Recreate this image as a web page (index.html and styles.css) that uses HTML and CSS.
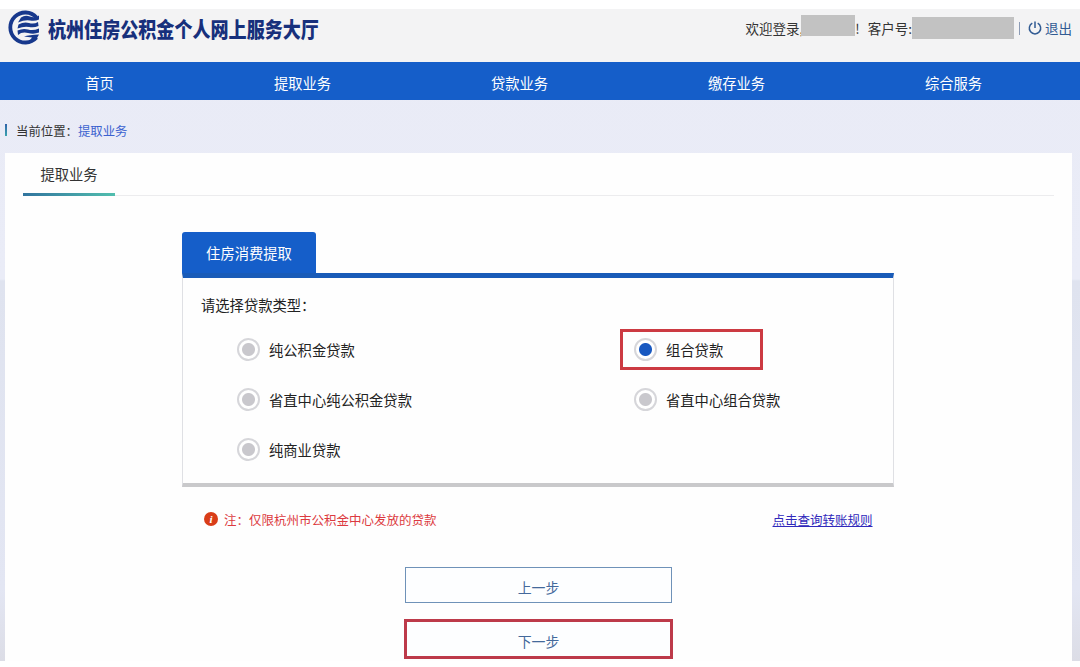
FILE: index.html
```html
<!DOCTYPE html>
<html lang="zh-CN">
<head>
  <meta charset="UTF-8">
  <meta name="viewport" content="width=device-width, initial-scale=1.0">
  <title>杭州住房公积金个人网上服务大厅</title>
  <link rel="stylesheet" href="styles.css">
</head>
<body>
  <div class="page">
    <header class="header">
      <svg class="logo" viewBox="0 0 36 36" width="36" height="36">
        <path d="M31.500 7.500 A15 15 0 1 0 31.500 27.500" fill="none" stroke="#17388c" stroke-width="3.800"/>
        <path d="M16 7.500 Q20 4.500 25 6.500 T34 5.500 V9.500 Q30 11.500 25 10.500 T13 12.500 Z" fill="#17388c"/>
        <path d="M13.500 14.500 Q19 11.500 24 13 T33 12 L33.500 16 Q29 18 24 17 T12.500 18.500 Z" fill="#17388c"/>
        <path d="M12.500 20.500 Q18 18 23 19.500 T34 18.500 V22.500 Q29 24.500 23 23 T13 25 Z" fill="#17388c"/>
        <path d="M19 26.500 Q24 25 34 24.500 L31.500 29 Q26 33 19 33.500 Q25 31 27 27.500 Z" fill="#17388c"/>
      </svg>
      <h1 class="site-name"><span>杭州住房公积金个人网上服务大厅</span></h1>
      <div class="user">
        <span>欢迎登录,</span><i class="mask mask-name"></i><span class="mark">!</span>
        <span class="account">客户号:</span><i class="mask mask-no"></i>
        <span class="divider"></span>
        <a class="logout" href="#">
          <svg viewBox="0 0 14 14" width="14" height="14" fill="none" stroke="#315b93" stroke-width="1.500">
            <path d="M4.300 2.200 A5.700 5.700 0 1 0 9.700 2.200 M7 0.500 V7"/>
          </svg>退出</a>
      </div>
    </header>

    <nav class="nav">
      <a href="#">首页</a>
      <a href="#">提取业务</a>
      <a href="#">贷款业务</a>
      <a href="#">缴存业务</a>
      <a href="#">综合服务</a>
    </nav>

    <div class="crumb"><span>当前位置：</span><a href="#">提取业务</a></div>

    <main class="panel">
      <div class="panel-head"><div class="panel-title">提取业务</div></div>

      <section class="box">
        <div class="box-tab">住房消费提取</div>
        <div class="box-body">
          <p class="question">请选择贷款类型：</p>
          <div class="options">
            <label class="option"><i class="radio"></i>纯公积金贷款</label>
            <label class="option picked"><i class="radio on"></i>组合贷款</label>
            <label class="option"><i class="radio"></i>省直中心纯公积金贷款</label>
            <label class="option"><i class="radio"></i>省直中心组合贷款</label>
            <label class="option"><i class="radio"></i>纯商业贷款</label>
          </div>
        </div>
      </section>

      <div class="tips">
        <i class="tip-icon">i</i>
        <span>注：仅限杭州市公积金中心发放的贷款</span>
        <a href="#">点击查询转账规则</a>
      </div>

      <div class="buttons">
        <button class="btn">上一步</button>
        <button class="btn btn-next">下一步</button>
      </div>
    </main>
  </div>
</body>
</html>
```

FILE: styles.css
```css
* {
  box-sizing: border-box;
}

body {
  margin: 0;
  height: 667px;
  padding: 9px 0 6px;
  overflow: hidden;
  background: #fff;
  font-family: "Noto Sans CJK SC", sans-serif;
  font-size: 14.3px;
  color: #333;
}

a {
  text-decoration: none;
}

.page {
  height: 652px;
  background: linear-gradient(#e9ebf6 0, #eaecf7 270px, #dfe3ef 272px, #e3e6f3 580px, #dcdde6 652px);
}

.header {
  display: flex;
  height: 53px;
  padding: 0 8px 0 5px;
  background: #f3f3f4;
}

.logo {
  margin-top: 1px;
}

.site-name {
  width: 272px;
  margin: 3px 0 0 7px;
  font-size: 21px;
  font-weight: 900;
  line-height: 32px;
  color: #17307c;
  white-space: nowrap;
}

/* 标题字形偏窄 */
.site-name span {
  display: inline-block;
  transform: scaleX(0.860);
  transform-origin: left;
}

.user {
  display: flex;
  align-items: center;
  height: 38px;
  margin-left: auto;
  font-size: 13.5px;
  white-space: nowrap;
}

.mask {
  background: #c2c2c2;
}

.mask-name {
  width: 54px;
  height: 21px;
  margin: -6px 0 0 -2px;
}

.mask-no {
  width: 102px;
  height: 22px;
}

.mark {
  margin-right: 8px;
}

.divider {
  width: 1px;
  height: 13px;
  margin: 0 8px 0 5px;
  background: #8c9bb5;
}

.logout {
  display: flex;
  align-items: center;
  gap: 3px;
  color: #315b93;
}

.nav {
  display: flex;
  height: 38px;
  padding-left: 5px;
  background: #155ec9;
}

.nav a {
  width: 217px;
  line-height: 41px;
  text-align: center;
  color: #fff;
}

.nav a:first-child {
  width: 189px;
}

.crumb {
  display: flex;
  align-items: center;
  height: 53px;
  padding: 9px 0 0 5px;
  font-size: 12.4px;
}

.crumb::before {
  content: "";
  width: 2px;
  height: 12px;
  margin: -3px 9px 0 0;
  background: linear-gradient(#2f62a8, #3ba3ae);
}

.crumb a {
  color: #3b62cf;
}

.panel {
  height: 508px;
  margin: 0 8px 0 5px;
  padding: 0 18px;
  background: #fefefe;
}

.panel-head {
  display: flex;
  height: 43px;
  border-bottom: 1px solid #ececee;
}

.panel-title {
  width: 92px;
  height: 43px;
  line-height: 42px;
  text-align: center;
  border-bottom: 3px solid;
  border-image: linear-gradient(90deg, #30739e, #52bfae) 1;
}

.box {
  width: 712px;
  margin: 36px 0 0 159px;
}

.box-tab {
  width: 134px;
  height: 41px;
  line-height: 42px;
  border-radius: 3px 3px 0 0;
  text-align: center;
  color: #fff;
  background: #155ec9;
}

.box-body {
  height: 214px;
  padding-left: 18px;
  border: 1px solid #dfe0e4;
  border-top: 5px solid #195bb8;
  border-bottom: 4px solid #c9c9cb;
  color: #222;
}

.question {
  margin: 0;
  padding-top: 15px;
  line-height: 24px;
}

.options {
  display: grid;
  grid-template-columns: 397px 1fr;
  grid-auto-rows: 50px;
  margin-top: 7px;
  padding-left: 36px;
}

.option {
  display: flex;
  align-items: center;
  gap: 9px;
}

.picked {
  align-self: center;
  width: 143px;
  height: 41px;
  margin-left: -14px;
  padding-left: 11px;
  border: 3px solid #cc3a42;
}

.radio {
  width: 23px;
  height: 23px;
  border: 2px solid #d6d6da;
  border-radius: 50%;
  background: #c9c9cd content-box;
  padding: 3px;
  background: radial-gradient(circle, #c9c8cd 6px, #fff 7px);
}

.radio.on {
  background: radial-gradient(circle, #1858c0 6px, #fff 7px);
}

.tips {
  display: flex;
  align-items: center;
  height: 20px;
  margin: 22px 0 0 181px;
  font-size: 12.5px;
  color: #dc3a40;
}

.tip-icon {
  width: 14px;
  height: 14px;
  margin-right: 6px;
  border-radius: 50%;
  background: #d93d18;
  color: #fff;
  font: italic bold 11px/14px "Liberation Serif", serif;
  text-align: center;
}

.tips a {
  margin-left: 336px;
  color: #3029bb;
  text-decoration: underline;
}

.buttons {
  display: flex;
  flex-direction: column;
  align-items: center;
  width: 269px;
  margin: 38px 0 0 381px;
}

.btn {
  width: 267px;
  height: 36px;
  padding: 3px 0 0;
  border: 1px solid #6f92b8;
  background: #fdfeff;
  font: 13.9px "Noto Sans CJK SC", sans-serif;
  color: #44699b;
}

.btn-next {
  width: 269px;
  height: 40px;
  margin-top: 16px;
  border: 3px solid #bd3a4a;
}
```
